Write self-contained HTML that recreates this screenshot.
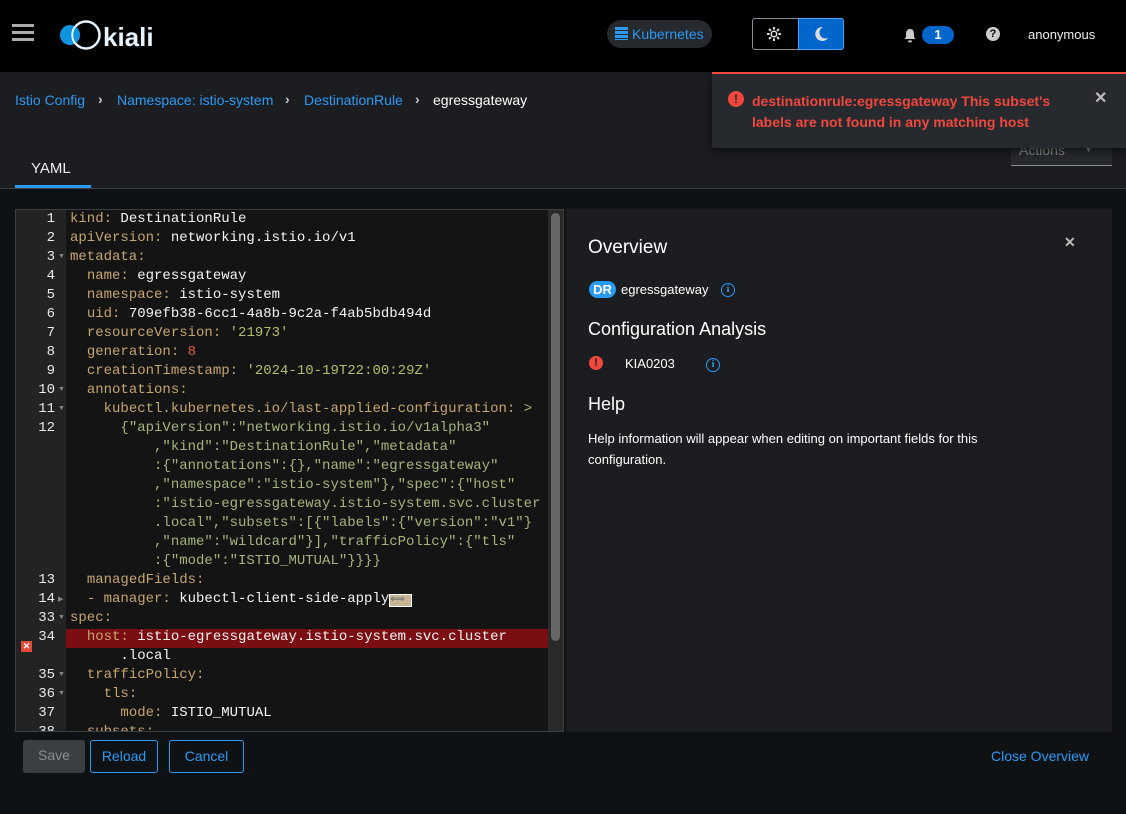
<!DOCTYPE html>
<html><head><meta charset="utf-8">
<style>
*{margin:0;padding:0;box-sizing:border-box}
body{width:1126px;height:814px;background:#0f1215;font-family:"Liberation Sans",sans-serif;color:#e0e0e0;position:relative;overflow:hidden}
.a{position:absolute}
#hdr{left:0;top:0;width:1126px;height:72px;background:#000}
#sub{left:0;top:72px;width:1126px;height:117px;background:#1b1d21;border-bottom:1px solid #3c3f42}
.bc{top:92px;font-size:14px;color:#2b9af3}
.chev{top:91px;font-size:14px;color:#c8c8c8;font-weight:bold}
#ed{left:15px;top:209px;width:549px;height:523px;border:1px solid #3c3f42;background:#141414;overflow:hidden}
#gut{left:0;top:0;width:50px;height:523px;background:#232323}
.ln{position:absolute;left:0;width:39px;text-align:right;font:14px "Liberation Mono",monospace;color:#e8e8e8}
.fd{position:absolute;left:42px;font-size:7px;color:#888}
.cd{position:absolute;left:54px;font:14px "Liberation Mono",monospace;white-space:pre;color:#f4f4f4}
.k{color:#c6a56f}.s{color:#b5bd68}.n{color:#e55b3c}.s2{color:#a8b37a}
#rp{left:566px;top:209px;width:546px;height:523px;background:#1b1d21}
.btn{top:740px;height:33px;border-radius:3px;font-size:14px;text-align:center;line-height:31px}
</style></head><body>
<div class="a" id="hdr"></div>
<div class="a" style="left:12px;top:24px;width:22px;height:3px;background:#aaa;box-shadow:0 7px 0 #aaa,0 14px 0 #aaa"></div>
<svg class="a" style="left:57px;top:18px" width="110" height="34" viewBox="0 0 110 34">
<circle cx="13" cy="17" r="10" fill="#0f93e0"/><circle cx="29" cy="17" r="13.5" fill="none" stroke="#e6f4ff" stroke-width="2.5"/>
<path d="M19 9 A10 10 0 0 1 19 25 A13 13 0 0 1 19 9Z" fill="#0f93e0"/>
<text x="46" y="28" font-family="Liberation Sans" font-weight="bold" font-size="26" fill="#e6f4ff">kiali</text></svg>
<div class="a" style="left:607px;top:20px;width:105px;height:28px;border-radius:14px;background:#26292d"></div>
<div class="a" style="left:615px;top:27px;width:13px;height:13px;background:repeating-linear-gradient(#2b9af3 0 3px,#26292d 3px 4px)"></div>
<div class="a" style="left:632px;top:26px;font-size:14px;color:#2b9af3">Kubernetes</div>
<div class="a" style="left:752px;top:18px;width:92px;height:32px;border:1px solid #8a8d90;border-radius:3px;background:#000"></div>
<div class="a" style="left:798px;top:18px;width:46px;height:32px;background:#0066cc;border:1px solid #4aa5f5;border-radius:0 3px 3px 0"></div>
<svg class="a" style="left:767px;top:27px" width="14" height="14" viewBox="0 0 14 14"><g stroke="#ddd" stroke-width="2"><path d="M7 0v14M0 7h14M2 2l10 10M12 2L2 12"/></g><circle cx="7" cy="7" r="4" fill="#ddd" stroke="#000" stroke-width="1"/><circle cx="7" cy="7" r="2" fill="#000"/></svg>
<svg class="a" style="left:813px;top:26px" width="16" height="16" viewBox="0 0 16 16"><path d="M10 1A7 7 0 1 0 15 12 A6 6 0 0 1 10 1Z" fill="#ddd"/></svg>
<svg class="a" style="left:903px;top:28px" width="14" height="15" viewBox="0 0 14 15"><path d="M7 1C4 1 3 3.5 3 6v3L1.5 11h11L11 9V6C11 3.5 10 1 7 1Z M5 12.5a2 2 0 0 0 4 0Z" fill="#ccc"/></svg>
<div class="a" style="left:922px;top:26px;width:32px;height:18px;border-radius:9px;background:#0066cc;color:#fff;font-size:13px;font-weight:bold;text-align:center;line-height:18px">1</div>
<div class="a" style="left:986px;top:27px;width:14px;height:14px;border-radius:7px;background:#ccc;color:#000;font-size:11px;font-weight:bold;text-align:center;line-height:14px">?</div>
<div class="a" style="left:1028px;top:27px;font-size:13px;color:#eee">anonymous</div>

<div class="a" id="sub"></div>
<div class="a bc" style="left:15px">Istio Config</div>
<div class="a chev" style="left:98px">›</div>
<div class="a bc" style="left:117px">Namespace: istio-system</div>
<div class="a chev" style="left:285px">›</div>
<div class="a bc" style="left:304px">DestinationRule</div>
<div class="a chev" style="left:415px">›</div>
<div class="a" style="left:433px;top:92px;font-size:14px;color:#fff">egressgateway</div>
<div class="a" style="left:31px;top:160px;font-size:15px;color:#eee">YAML</div>
<div class="a" style="left:15px;top:185px;width:76px;height:3px;background:#2b9af3"></div>
<div class="a" style="left:1011px;top:140px;width:101px;height:26px;border-bottom:1px solid #8a8d90;background:#26292d"></div>
<div class="a" style="left:1019px;top:142px;font-size:14px;color:#888">Actions</div>
<div class="a" style="left:1084px;top:144px;font-size:9px;color:#888">▼</div>

<div class="a" style="left:712px;top:72px;width:414px;height:76px;background:#26292d;border-top:2px solid #f0483e;box-shadow:0 3px 8px rgba(0,0,0,.6)"></div>
<div class="a" style="left:728px;top:91px;width:16px;height:16px;border-radius:8px;background:#f0483e;color:#26292d;font-size:12px;font-weight:bold;text-align:center;line-height:16px">!</div>
<div class="a" style="left:752px;top:91px;font-size:14px;font-weight:bold;color:#f0483e;line-height:21px;width:310px">destinationrule:egressgateway This subset's labels are not found in any matching host</div>
<div class="a" style="left:1094px;top:88px;font-size:16px;font-weight:bold;color:#bbb">✕</div>

<div class="a" id="ed">
<div class="a" id="gut"></div>
<div class="a" style="left:50px;top:419px;width:482px;height:19px;background:#7a0e12"></div>
<div class="a" style="left:532px;top:0;width:16px;height:523px;background:#2a2a2a"></div>
<div class="a" style="left:535px;top:3px;width:9px;height:428px;border-radius:5px;background:#666"></div>
<div class="a" style="left:5px;top:431px;width:11px;height:11px;background:#e24a3b;color:#fff;font-size:9px;font-weight:bold;text-align:center;line-height:11px">✕</div>
<div id="lines"></div>
</div>
<script>
var L=[
["1",0,'<span class="k">kind:</span> DestinationRule'],
["2",0,'<span class="k">apiVersion:</span> networking.istio.io/v1'],
["3",1,'<span class="k">metadata:</span>'],
["4",0,'  <span class="k">name:</span> egressgateway'],
["5",0,'  <span class="k">namespace:</span> istio-system'],
["6",0,'  <span class="k">uid:</span> 709efb38-6cc1-4a8b-9c2a-f4ab5bdb494d'],
["7",0,'  <span class="k">resourceVersion:</span> <span class="s">\'21973\'</span>'],
["8",0,'  <span class="k">generation:</span> <span class="n">8</span>'],
["9",0,'  <span class="k">creationTimestamp:</span> <span class="s">\'2024-10-19T22:00:29Z\'</span>'],
["10",1,'  <span class="k">annotations:</span>'],
["11",1,'    <span class="k">kubectl.kubernetes.io/last-applied-configuration:</span> <span class="s2">&gt;</span>'],
["12",0,'      <span class="s2">{"apiVersion":"networking.istio.io/v1alpha3"</span>'],
["",0,'          <span class="s2">,"kind":"DestinationRule","metadata"</span>'],
["",0,'          <span class="s2">:{"annotations":{},"name":"egressgateway"</span>'],
["",0,'          <span class="s2">,"namespace":"istio-system"},"spec":{"host"</span>'],
["",0,'          <span class="s2">:"istio-egressgateway.istio-system.svc.cluster</span>'],
["",0,'          <span class="s2">.local","subsets":[{"labels":{"version":"v1"}</span>'],
["",0,'          <span class="s2">,"name":"wildcard"}],"trafficPolicy":{"tls"</span>'],
["",0,'          <span class="s2">:{"mode":"ISTIO_MUTUAL"}}}}</span>'],
["13",0,'  <span class="k">managedFields:</span>'],
["14",2,'  <span class="k">- manager:</span> kubectl-client-side-apply<span style="background:#c9b496;color:#666;font-size:10px;border:1px solid #fff">⟺ </span>'],
["33",1,'<span class="k">spec:</span>'],
["34",0,'  <span class="k">host:</span> istio-egressgateway.istio-system.svc.cluster'],
["",0,'      .local'],
["35",1,'  <span class="k">trafficPolicy:</span>'],
["36",1,'    <span class="k">tls:</span>'],
["37",0,'      <span class="k">mode:</span> ISTIO_MUTUAL'],
["38",0,'  <span class="k">subsets:</span>']];
var h='';L.forEach(function(l,i){var t=i*19+1;h+='<div class="ln" style="top:'+t+'px">'+l[0]+'</div>';if(l[1])h+='<div class="fd" style="top:'+(t+4)+'px">'+(l[1]==1?'▼':'▶')+'</div>';h+='<div class="cd" style="top:'+t+'px">'+l[2]+'</div>';});
document.getElementById('lines').innerHTML=h;
</script>

<div class="a" id="rp"></div>
<div class="a" style="left:588px;top:237px;font-size:19px;color:#fff">Overview</div>
<div class="a" style="left:1064px;top:234px;font-size:14px;font-weight:bold;color:#bbb">✕</div>
<div class="a" style="left:589px;top:281px;width:27px;height:17px;border-radius:9px;background:#2b9af3;color:#fff;font-size:13px;font-weight:bold;text-align:center;line-height:17px">DR</div>
<div class="a" style="left:621px;top:282px;font-size:13px;color:#fff">egressgateway</div>
<div class="a" style="left:721px;top:283px;width:14px;height:14px;border:1.5px solid #2b9af3;border-radius:7px;color:#2b9af3;font-size:10px;font-weight:bold;text-align:center;line-height:11px;font-family:'Liberation Serif',serif">i</div>
<div class="a" style="left:588px;top:319px;font-size:18px;color:#fff">Configuration Analysis</div>
<div class="a" style="left:589px;top:356px;width:14px;height:14px;border-radius:7px;background:#f0483e;color:#1b1d21;font-size:11px;font-weight:bold;text-align:center;line-height:14px">!</div>
<div class="a" style="left:625px;top:356px;font-size:13px;color:#fff">KIA0203</div>
<div class="a" style="left:706px;top:358px;width:14px;height:14px;border:1.5px solid #2b9af3;border-radius:7px;color:#2b9af3;font-size:10px;font-weight:bold;text-align:center;line-height:11px;font-family:'Liberation Serif',serif">i</div>
<div class="a" style="left:588px;top:394px;font-size:18px;color:#fff">Help</div>
<div class="a" style="left:588px;top:428px;font-size:13px;color:#fff;line-height:21px;width:460px">Help information will appear when editing on important fields for this configuration.</div>

<div class="a btn" style="left:23px;width:62px;background:#3c3f42;color:#8a8d90">Save</div>
<div class="a btn" style="left:90px;width:68px;border:1px solid #2b9af3;color:#2b9af3">Reload</div>
<div class="a btn" style="left:169px;width:75px;border:1px solid #2b9af3;color:#2b9af3">Cancel</div>
<div class="a" style="left:991px;top:748px;font-size:14px;color:#2b9af3">Close Overview</div>
</body></html>
